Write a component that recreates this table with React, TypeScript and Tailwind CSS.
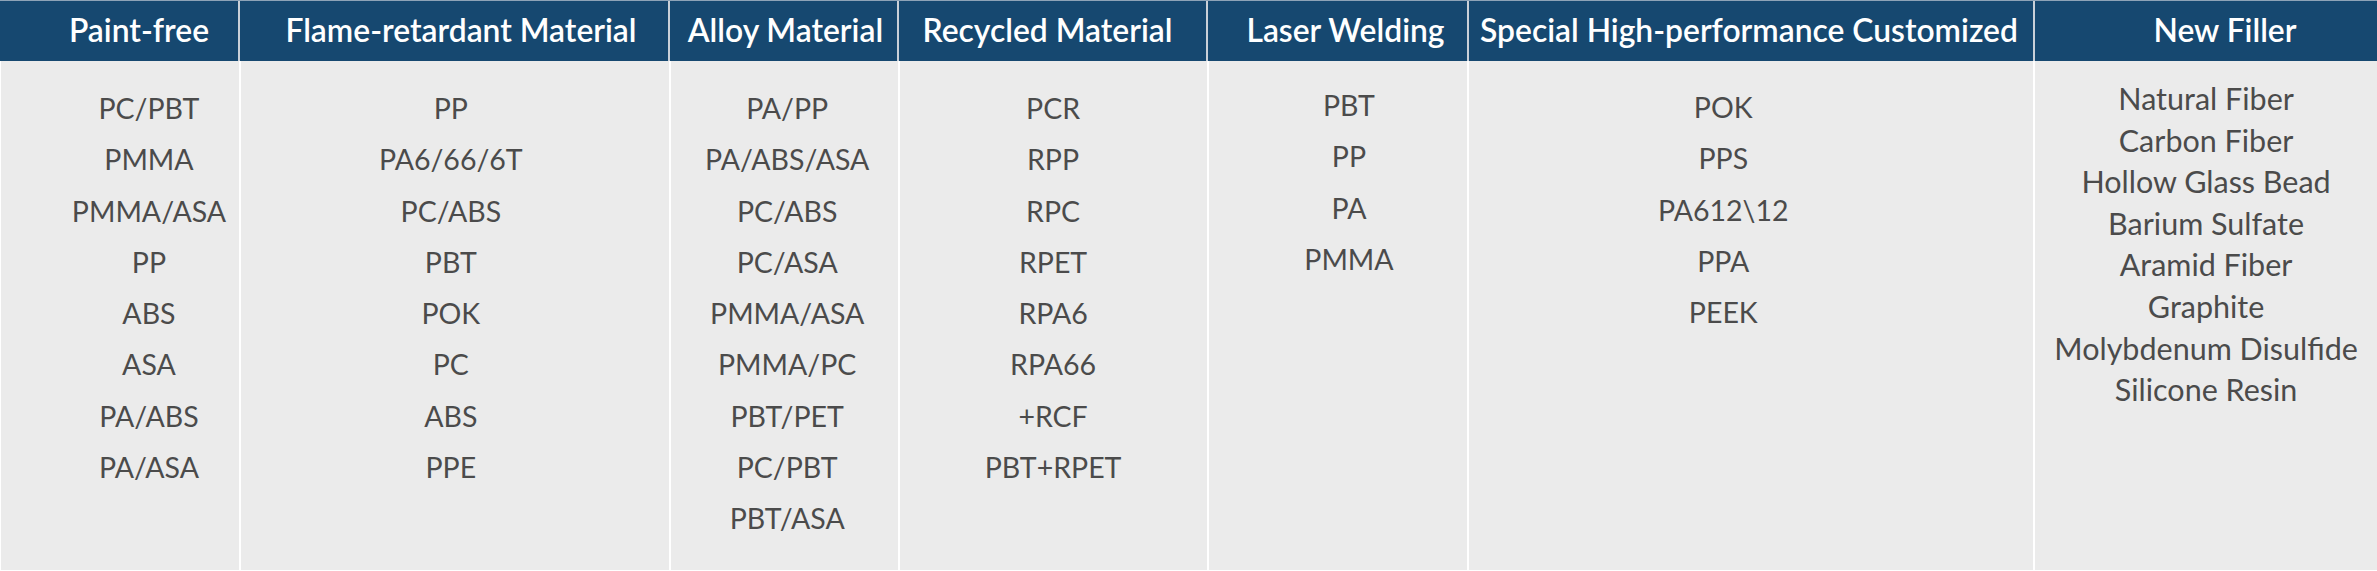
import React from "react";

type Col = {
  title: string;
  items: string[];
  w: string;
  head: string;
  body: string;
};

const cols: Col[] = [
  {
    title: "Paint-free",
    items: ["PC/PBT", "PMMA", "PMMA/ASA", "PP", "ABS", "ASA", "PA/ABS", "PA/ASA"],
    w: "w-[238px]",
    head: "pl-[40px]",
    body: "pl-[58px] pt-[22px] text-[28.5px] leading-[51.3px]",
  },
  {
    title: "Flame-retardant Material",
    items: ["PP", "PA6/66/6T", "PC/ABS", "PBT", "POK", "PC", "ABS", "PPE"],
    w: "w-[430px] border-l-2",
    head: "pl-[14px]",
    body: "pr-[8px] pt-[22px] text-[28.5px] leading-[51.3px]",
  },
  {
    title: "Alloy Material",
    items: ["PA/PP", "PA/ABS/ASA", "PC/ABS", "PC/ASA", "PMMA/ASA", "PMMA/PC", "PBT/PET", "PC/PBT", "PBT/ASA"],
    w: "w-[229px] border-l-2",
    head: "pl-[4px]",
    body: "pl-[6px] pt-[22px] text-[28.5px] leading-[51.3px]",
  },
  {
    title: "Recycled Material",
    items: ["PCR", "RPP", "RPC", "RPET", "RPA6", "RPA66", "+RCF", "PBT+RPET"],
    w: "w-[309px] border-l-2",
    head: "pr-[10px]",
    body: "pt-[22px] text-[28.5px] leading-[51.3px]",
  },
  {
    title: "Laser Welding",
    items: ["PBT", "PP", "PA", "PMMA"],
    w: "w-[261px] border-l-2",
    head: "pl-[16px]",
    body: "pl-[22px] pt-[19px] text-[28.5px] leading-[51.3px]",
  },
  {
    title: "Special High-performance Customized",
    items: ["POK", "PPS", "PA612\\12", "PPA", "PEEK"],
    w: "w-[566px] border-l-2",
    head: "pr-[4px]",
    body: "pr-[56px] pt-[21px] text-[28.5px] leading-[51.3px]",
  },
  {
    title: "New Filler",
    items: [
      "Natural Fiber",
      "Carbon Fiber",
      "Hollow Glass Bead",
      "Barium Sulfate",
      "Aramid Fiber",
      "Graphite",
      "Molybdenum Disulfide",
      "Silicone Resin",
    ],
    w: "w-[344px] border-l-2",
    head: "pl-[38px]",
    body: "pt-[17px] text-[30.5px] leading-[41.6px]",
  },
];

export default function App() {
  return (
    <div
      className="w-[2377px] h-[571px] flex flex-col bg-[#ebebeb] overflow-hidden"
      style={{ fontFamily: "Lato, 'Noto Sans', sans-serif" }}
    >
      <div className="flex h-[61px] bg-[#164870] border-t border-[#8ea3b7]">
        {cols.map((c) => (
          <div
            key={c.title}
            className={`${c.w} border-[#c9d0d8] flex items-center justify-center text-white text-[31.8px] font-semibold whitespace-nowrap ${c.head}`}
          >
            {c.title}
          </div>
        ))}
      </div>
      <div className="flex flex-1 border-b border-l border-white">
        {cols.map((c) => (
          <div
            key={c.title}
            className={`${c.w} border-white flex flex-col items-center text-[#4b4b4b] whitespace-nowrap ${c.body}`}
          >
            {c.items.map((it) => (
              <div key={it}>{it}</div>
            ))}
          </div>
        ))}
      </div>
    </div>
  );
}
